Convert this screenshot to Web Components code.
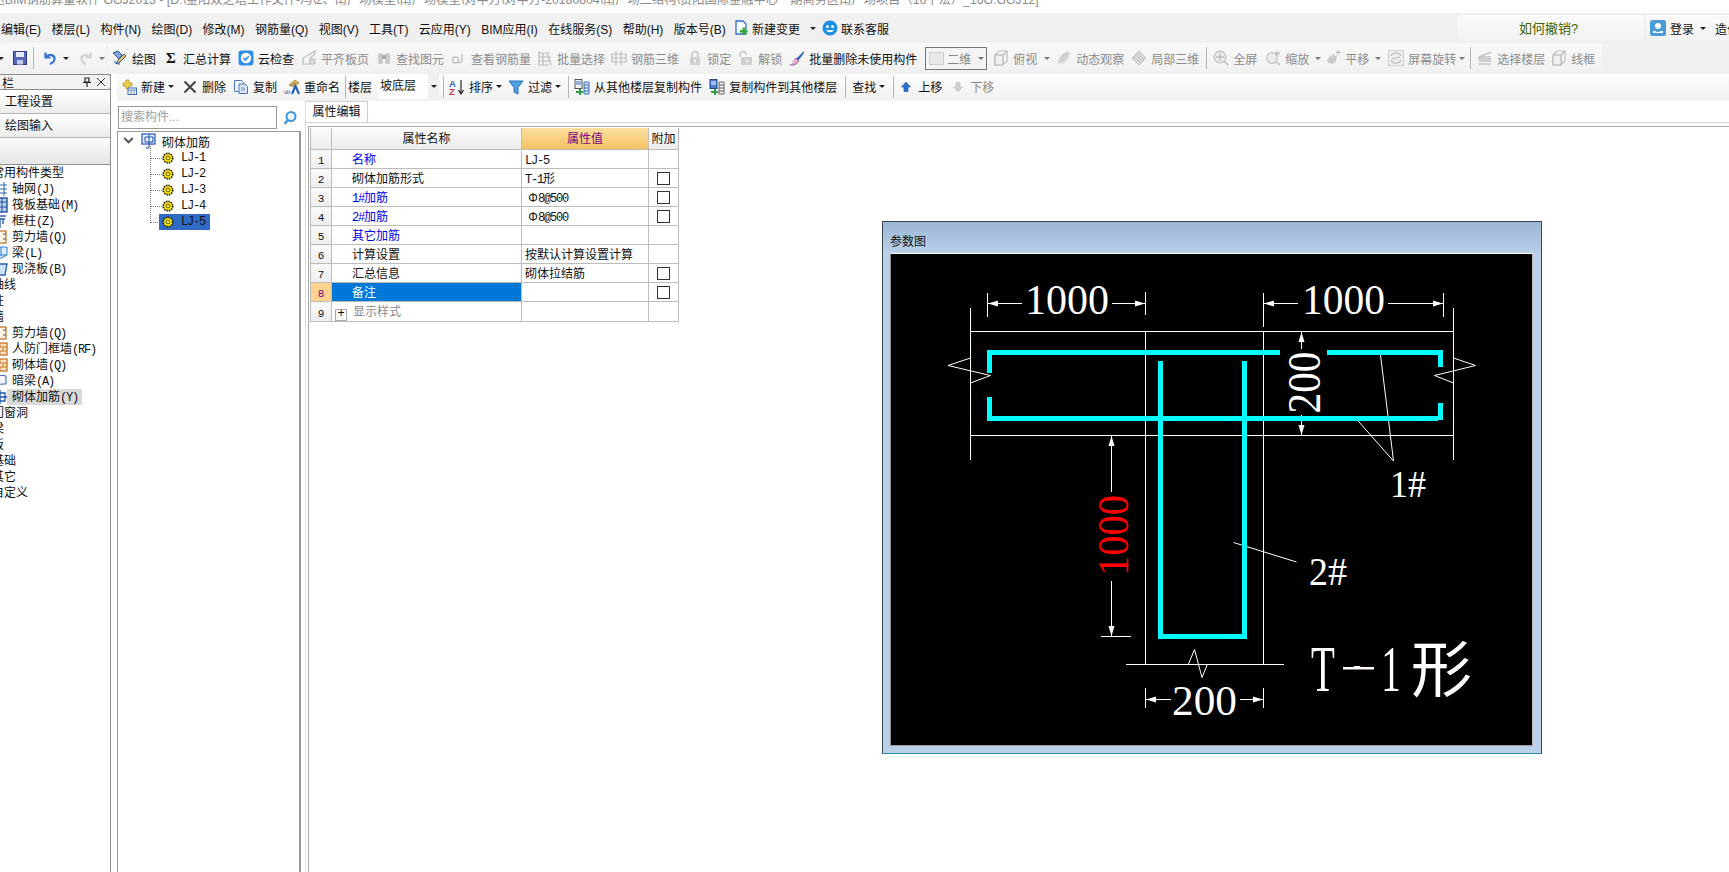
<!DOCTYPE html>
<html lang="zh">
<head>
<meta charset="utf-8">
<title>GGJ2013</title>
<style>
  html, body { margin: 0; height: 100%; background: #fff; overflow: hidden; }
  body { font: 12px "Liberation Sans", "Noto Sans CJK SC", sans-serif; color: #111; }
  app-shell { display: block; position: relative; width: 1729px; height: 872px; overflow: hidden; }
</style>
</head>
<body>
<app-shell>
  <title-bar>广联达BIM钢筋算量软件 GGJ2013 - [D:\金阳双之塔工作文件-冯\2、南广场模型\南广场模型\对中方\对中方-20180804\南广场二结构\贵阳国际金融中心一期商务区南广场项目（16平法）_16G.GGJ12]</title-bar>
  <menu-bar></menu-bar>
  <main-toolbar></main-toolbar>
  <work-area></work-area>
  <param-window></param-window>
</app-shell>

<script>
const svg = (body, w = 16, h = 16) =>
  `<svg width="${w}" height="${h}" viewBox="0 0 16 16" style="display:block;flex:none">${body}</svg>`;

const GRAY = 'fill="none" stroke="#bdbdbd" stroke-width="1.2"';
const ICONS = {
  save: '<rect x="1.5" y="1.5" width="13" height="13" fill="#5566bb" stroke="#2f3c86"/><rect x="4" y="2" width="8" height="5" fill="#e6ebf7"/><rect x="5" y="10" width="6" height="4.5" fill="#c8c8ea"/>',
  undo: '<path d="M3.5 2.5v5h5" fill="none" stroke="#2f74d0" stroke-width="2.2"/><path d="M4 7.5C7 3.5 13 4.5 12.5 9c-.3 2.5-2 4-4.5 5" fill="none" stroke="#2f74d0" stroke-width="2.2"/>',
  redo: '<path d="M12.5 2.5v5h-5" fill="none" stroke="#cfd3d6" stroke-width="2.2"/><path d="M12 7.5C9 3.5 3 4.5 3.5 9c.3 2.5 2 4 4.5 5" fill="none" stroke="#cfd3d6" stroke-width="2.2"/>',
  draw: '<path d="M1 3l5-2 4 4-3 4z" fill="#7fa6d8" stroke="#2d5a9e"/><path d="M4 14l2-4 6-6 2 2-6 6z" fill="#e9c15a" stroke="#2d5a9e"/><path d="M2 11c1 2 3 3 6 3" fill="none" stroke="#2d5a9e"/>',
  cloud: '<rect x=".5" y=".5" width="15" height="15" rx="3" fill="#2d8fe3"/><circle cx="8" cy="8" r="5.2" fill="#fff"/><path d="M5.2 8l2 2 3.6-3.6" fill="none" stroke="#2d8fe3" stroke-width="1.6"/>',
  align: `<path d="M2 14V8l7-4 5-3v3l-5 4v6z" ${GRAY}/><path d="M9 9h5v5H9z" fill="#ddd" stroke="#bbb"/>`,
  binoc: '<rect x="2" y="3" width="5" height="11" rx="2" fill="#c9c9c9"/><rect x="9" y="3" width="5" height="11" rx="2" fill="#c9c9c9"/><rect x="6" y="5" width="4" height="4" fill="#aaa"/>',
  look: '<circle cx="4.5" cy="10" r="3" fill="none" stroke="#c4c4c4" stroke-width="1.4"/><path d="M11 4v7a2.5 2.5 0 0 1-4 1" fill="none" stroke="#c4c4c4" stroke-width="1.4"/>',
  batch: `<path d="M2 1v14M2 3h11M2 7h12M2 11h12M2 15h10M6 3v12M10 3l4 12" ${GRAY}/>`,
  rebar: `<path d="M1 4h14v8H1zM1 8h14M5 1v14M10 1v14" ${GRAY}/>`,
  lock: '<path d="M5 7V4.5a3 3 0 0 1 6 0V7" fill="none" stroke="#c6c6c6" stroke-width="1.5"/><rect x="3" y="7" width="10" height="8" rx="1" fill="#cfcfcf"/><rect x="7" y="9.5" width="2" height="3" fill="#f2f2f2"/>',
  unlock: '<path d="M2 7V4.5a3 3 0 0 1 6 0" fill="none" stroke="#c6c6c6" stroke-width="1.5"/><rect x="3" y="7" width="11" height="8" rx="1" fill="#cfcfcf"/><rect x="8" y="9.5" width="2" height="3" fill="#f2f2f2"/>',
  broom: '<path d="M15 1L7 9l2 2 6-8z" fill="#2a61c4"/><path d="M7 8l3 3-4 4H1c2-1 3-4 6-7z" fill="#e7a3b8" stroke="#7b4a9b" stroke-width=".7"/><path d="M2 14l5-4" stroke="#fff"/>',
  cube: `<path d="M2 5l4-4h8v10l-4 4H2zM2 5h8v10M10 5l4-4" ${GRAY}/><path d="M2 5h8v10H2z" fill="#ececec" fill-opacity=".6" stroke="#bdbdbd"/>`,
  orbit: '<ellipse cx="8" cy="8" rx="3.8" ry="7.5" transform="rotate(40 8 8)" fill="#cfcfcf"/><path d="M2 13c4 2 10-3 12-10" fill="none" stroke="#e6e6e6" stroke-width="1.4"/>',
  local: '<path d="M8 1l7 7-7 7-7-7z" fill="#dcdcdc" stroke="#c0c0c0"/><path d="M4 4l8 8M6 2.5l7.5 7.5M2.5 6l7.5 7.5" stroke="#bbb" fill="none"/>',
  full: '<circle cx="7" cy="7" r="5.8" fill="#eee" stroke="#bcbcbc" stroke-width="1.3"/><path d="M7 3v8M3 7h8M11 11l4 4" stroke="#bbb" stroke-width="1.3"/>',
  zoom: '<circle cx="7" cy="8" r="5.3" fill="#ececec" stroke="#c4c4c4" stroke-width="1.3"/><path d="M12 1v5M10 3.5h5M11 12l4 3" stroke="#bbb" stroke-width="1.4"/>',
  pan: '<path d="M2 11l3-6 2 2 1-4 2 3 2-1-1 6c-1 3-7 4-9 0z" fill="#cbcbcb"/><path d="M13 0v5M11 2.5h5" stroke="#bbb"/>',
  rotate: `<rect x=".5" y=".5" width="15" height="15" fill="#ededed" stroke="#d2d2d2"/><path d="M3 6a5.5 5.5 0 0 1 10 0M13 10a5.5 5.5 0 0 1-10 0" ${GRAY}/><path d="M4 9l8-2" stroke="#bbb"/>`,
  floor: '<path d="M14 2L2 7h12M2 7v2h12M2 11h12M2 14h12" fill="none" stroke="#c2c2c2" stroke-width="1.4"/>',
  newc: '<path d="M5 1h3v3h3v3H8v3H5V7H2V4h3z" fill="#f2d24a" stroke="#a98a20" stroke-width=".7"/><rect x="7" y="9" width="8.5" height="6.5" fill="#fff" stroke="#3e6fb5"/><path d="M7 11h8.5M10 11v4.5M13 11v4.5" stroke="#3e6fb5" stroke-width=".8"/>',
  del: '<path d="M2.5 2.5l11 11M13.5 2.5l-11 11" stroke="#444" stroke-width="2"/>',
  copy: '<path d="M1.5 1.5h7l2 2v9h-9z" fill="#f2f6fc" stroke="#4a78bb"/><path d="M6 5h6l2.5 2.5v7H6z" fill="#dce8f8" stroke="#4a78bb"/><path d="M8 9h4M8 11h4" stroke="#4a78bb" stroke-width=".8"/>',
  rename: '<path d="M5 6l6-5 4 3-5 4z" fill="#d7b44a" stroke="#7b6420" stroke-width=".6"/><path d="M7 7l4-3" stroke="#777"/><text x="0" y="14.5" font-size="7" font-family="Liberation Serif" fill="#444">ab</text><path d="M8 15l3.5-8 3.5 8" fill="none" stroke="#1f57b8" stroke-width="2"/>',
  sort: '<text x="0" y="7.5" font-size="9.5" font-weight="700" font-family="Liberation Sans" fill="#2d66c4">A</text><text x="0" y="16" font-size="9.5" font-weight="700" font-family="Liberation Sans" fill="#b5424a">Z</text><path d="M12 1v13M9.5 11l2.5 4 2.5-4" fill="none" stroke="#222" stroke-width="1.2"/>',
  funnel: '<path d="M1 2h14L10 8.5V15l-4-2V8.5z" fill="#4d9fe0" stroke="#2a70b5"/>',
  fromc: '<rect x="1" y=".5" width="7" height="9" fill="#f4f4f4" stroke="#555"/><path d="M2 3h5M2 5h5" stroke="#3a70c0"/><path d="M2 12h3v-2h2l0 2h2v2H7v2H5v-2H2z" fill="#2f9e3f"/><path d="M10 3h5v12h-5z" fill="#cfe0f4" stroke="#3a70c0"/><path d="M10 6h5M10 9h5M10 12h5" stroke="#3a70c0"/>',
  toc: '<rect x="1" y=".5" width="7" height="9" fill="#4d79d3" stroke="#27488f"/><path d="M2 3h5M2 5h5" stroke="#fff"/><path d="M2 12h3v-2h2l0 2h2v2H7v2H5v-2H2z" fill="#2f9e3f"/><path d="M10 3h5v12h-5z" fill="#eee" stroke="#666"/><path d="M10 6h5M10 9h5M10 12h5" stroke="#666"/>',
  up: '<path d="M8 3l4.5 5H10v4.5H6V8H3.500z" fill="#2c6fd1" stroke="#1c4d9c" stroke-width=".6"/>',
  down: '<path d="M8 13l4.5-5H10V3.500H6V8H3.500z" fill="#d0d0d0" stroke="#bdbdbd" stroke-width=".6"/>',
  newchg: '<path d="M3 1h7l3 3v10H3z" fill="#fff" stroke="#2a70c9" stroke-width="1.3"/><path d="M7 10h2.5V7.5H12V10h2.5v2.500H12V15H9.500v-2.500H7z" fill="#3aa53a"/>',
  service: '<circle cx="8" cy="8" r="7.5" fill="#1b8fe6"/><circle cx="5.5" cy="6.5" r="1.5" fill="#fff"/><circle cx="10.5" cy="6.5" r="1.5" fill="#fff"/><path d="M4 10c2 3 6 3 8 0z" fill="#fff"/>',
  user: '<rect width="16" height="16" rx="2.5" fill="#4b9bd6"/><circle cx="8" cy="6" r="3" fill="#fff"/><path d="M3 13v-2h2.5c1 1.5 4 1.5 5 0H13v2z" fill="#fff"/>',
  axis: '<path d="M2 1v14M7 1v14M12 1v14M0 4h15M0 8h15M0 12h15" stroke="#2e62ad" fill="none"/>',
  raft: '<rect x="1" y="1" width="14" height="14" fill="#bcd2ee" stroke="#1f4f9c" stroke-width="1.4"/><path d="M5 1v14M10 1v14M1 5h14M1 10h14" stroke="#1f4f9c"/>',
  col: '<path d="M2 3h12M3 6h10M8 6v9M5 6v5M11 6v5" stroke="#2e62ad" fill="none" stroke-width="1.4"/>',
  wall: '<rect x="2" y="2" width="12" height="12" fill="#fbf3e6" stroke="#c07a30" stroke-width="1.3"/><path d="M14 5h-3M14 10h-3" stroke="#555"/>',
  beam: '<path d="M1 14V6l8-4h6v8l-8 4z" fill="#dcebfb" stroke="#2e7fc9"/><path d="M9 2v8l6 0M9 10l-8 4" stroke="#2e7fc9" fill="none"/>',
  slab: '<path d="M1 3h14l-2 11H3z" fill="#cfe3f8" stroke="#2e62ad" stroke-width="1.4"/>',
  brick: '<rect x="1" y="2" width="14" height="12" fill="#f9e6c8" stroke="#c9742a" stroke-width="1.3"/><path d="M1 6h14M1 10h14M8 2v4M5 6v4M11 6v4M8 10v4" stroke="#c9742a"/>',
  dark: '<path d="M2 13V5c4-3 9-3 12-2v8c-3 0-8 0-12 2z" fill="#f2f6fb" stroke="#2e62ad"/>',
  tie: '<path d="M1 8h14M8 1v14M3 4h10v8H3z" stroke="#1f55b0" fill="none" stroke-width="1.3"/>',
  gear: '<circle cx="8" cy="8" r="5.4" fill="#ffee00" stroke="#222" stroke-width="2" stroke-dasharray="1.8 1"/><circle cx="8" cy="8" r="2.2" fill="#ffee00" stroke="#444"/>',
  root: '<rect x="1" y="1" width="13" height="10" fill="#eaf1fb" stroke="#2e62c4" stroke-width="1.3"/><path d="M4 4h8v5M4 4v5h8M8 1v14M5 15h3" stroke="#1f4fb5" fill="none"/>'
};

// ascii runs are set in the mono face, like the bitmap font of the original
const mix = text => text.replace(/[\x21-\x7e]+/g, m => `<span class="m">${m.replace(/</g, '&lt;')}</span>`);
const MONO_CSS = `.m { font-family: "Liberation Mono", monospace; font-size: 12px; letter-spacing: -1.2px; line-height: 1; }`;

class TitleBar extends HTMLElement {
  constructor() {
    super();
    this.attachShadow({ mode: 'open' });
    this.shadowRoot.innerHTML = `
      <style>
        :host { display: block; height: 13px; overflow: hidden; background: #fff; color: #8a8a8a; font-size: 12.25px; line-height: 13px; white-space: nowrap; }
        div { margin: -6px 0 0 -32px; }
      </style>
      <div><slot></slot></div>`;
  }
}

class MenuBar extends HTMLElement {
  constructor() {
    super();
    this.attachShadow({ mode: 'open' });
    const items = ['编辑(E)', '楼层(L)', '构件(N)', '绘图(D)', '修改(M)', '钢筋量(Q)', '视图(V)', '工具(T)', '云应用(Y)', 'BIM应用(I)', '在线服务(S)', '帮助(H)', '版本号(B)'];
    this.shadowRoot.innerHTML = `
      <style>
        :host { display: flex; align-items: center; height: 30px; padding-left: 1px; background: #f0f0f0; overflow: hidden; white-space: nowrap; }
        .item { margin-right: 10.4px; }
        .ico { display: flex; align-items: center; gap: 3px; }
        .caret { width: 0; height: 0; border: 3px solid transparent; border-top: 3px solid #222; border-bottom: 0; margin: 0 6px 0 10px; }
        .tip { margin-left: auto; width: 183px; padding-right: 4px; height: 26px; line-height: 28px; text-align: center; color: #3c6400; background: linear-gradient(#fafafa, #f2f2f2); border-radius: 3px; flex: none; font-size: 13px; }
        .login { flex: none; display: flex; align-items: center; width: 79px; height: 26px; margin-left: 2px; padding-left: 4px; background: linear-gradient(#fafafa, #f2f2f2); overflow: hidden; }
        .login span { margin-left: 4px; }
        .login .caret { margin: 0 9px 0 6px; }
      </style>
      ${items.map(t => `<span class="item">${t}</span>`).join('')}
      <span class="ico" style="margin-left:-3px">${svg(ICONS.newchg)}<span>新建变更</span></span>
      <i class="caret"></i>
      <span class="ico">${svg(ICONS.service)}<span>联系客服</span></span>
      <div class="tip">如何撤销?</div>
      <div class="login">${svg(ICONS.user)}<span>登录</span><i class="caret"></i><b style="font-weight:400">造价</b></div>`;
  }
}

// one toolbar button: icon, slotted label, optional little arrow
class ToolItem extends HTMLElement {
  constructor() {
    super();
    this.attachShadow({ mode: 'open' });
  }

  connectedCallback() {
    const icon = this.getAttribute('icon');
    const caret = this.getAttribute('caret');
    const off = this.hasAttribute('off');
    this.shadowRoot.innerHTML = `
      <style>
        :host { display: flex; align-items: center; gap: ${this.getAttribute('gap') || 4}px; flex: none; white-space: nowrap; color: ${off ? '#8c8c8c' : '#111'}; }
        i { width: 0; height: 0; border: 3px solid transparent; border-top: 3px solid ${off ? '#777' : '#222'}; border-bottom: 0; margin-left: ${(caret || 0) - 4}px; }
      </style>
      ${icon ? svg(ICONS[icon]) : ''}<slot></slot>${caret !== null ? '<i></i>' : ''}`;
  }
}

class ToolSep extends HTMLElement {
  constructor() {
    super();
    this.attachShadow({ mode: 'open' });
    this.shadowRoot.innerHTML = `<style>:host { display: block; flex: none; width: 1px; height: 22px; background: #b4b4b4; }</style>`;
  }
}

class MainToolbar extends HTMLElement {
  constructor() {
    super();
    this.attachShadow({ mode: 'open' });
    this.shadowRoot.innerHTML = `
      <style>
        :host { display: flex; height: 31px; background: #f0f0f0; padding: 0 0 1px; box-sizing: border-box; }
        .seg { display: flex; align-items: center; background: linear-gradient(#f9f9f9, #f0f0f0); border-radius: 3px; }
        .a { width: 106px; margin-right: 2px; }
        .b { width: 1494px; padding-left: 4px; box-sizing: border-box; }
        .combo { flex: none; display: flex; align-items: center; box-sizing: border-box; width: 62px; height: 23px; border: 1px solid #777; background: #f4f4f4; color: #888; padding-left: 3px; gap: 3px; }
        .combo b { width: 13px; height: 11px; background: #e8e8e8; border: 1px solid #ccc; }
        .combo i { width: 0; height: 0; border: 3px solid transparent; border-top: 3px solid #777; border-bottom: 0; margin-left: 4px; }
        .t { flex: none; width: 0; height: 0; border: 3px solid transparent; border-top: 3px solid #222; border-bottom: 0; }
      </style>
      <div class="seg a">
        <i class="t" style="margin-left:-2px"></i>
        <tool-item icon="save" style="margin-left:8px"></tool-item>
        <tool-sep style="margin-left:5px"></tool-sep>
        <tool-item icon="undo" caret="9" gap="0" style="margin-left:8px"></tool-item>
        <tool-item icon="redo" caret="9" gap="0" off style="margin-left:9px"></tool-item>
      </div>
      <div class="seg b">
        <tool-item icon="draw">绘图</tool-item>
        <span style="margin-left:10px;width:10px;font:700 15px 'Liberation Serif',serif;flex:none">Σ</span>
        <span style="margin-left:7px;flex:none">汇总计算</span>
        <tool-item icon="cloud" style="margin-left:7px">云检查</tool-item>
        <tool-item icon="align" off style="margin-left:7px">平齐板页</tool-item>
        <tool-item icon="binoc" off style="margin-left:7px">查找图元</tool-item>
        <tool-item icon="look" off style="margin-left:7px">查看钢筋量</tool-item>
        <tool-item icon="batch" off style="margin-left:6px">批量选择</tool-item>
        <tool-item icon="rebar" off style="margin-left:6px">钢筋三维</tool-item>
        <tool-item icon="lock" off style="margin-left:8px">锁定</tool-item>
        <tool-item icon="unlock" off style="margin-left:7px">解锁</tool-item>
        <tool-item icon="broom" style="margin-left:7px">批量删除未使用构件</tool-item>
        <div class="combo" style="margin-left:8px"><b></b>二维<i></i></div>
        <tool-item icon="cube" off caret="7" style="margin-left:6px">俯视</tool-item>
        <tool-item icon="orbit" off style="margin-left:6px">动态观察</tool-item>
        <tool-item icon="local" off style="margin-left:7px">局部三维</tool-item>
        <tool-sep style="margin-left:7px"></tool-sep>
        <tool-item icon="full" off style="margin-left:6px">全屏</tool-item>
        <tool-item icon="zoom" off caret="6" style="margin-left:8px">缩放</tool-item>
        <tool-item icon="pan" off caret="6" style="margin-left:4px">平移</tool-item>
        <tool-item icon="rotate" off caret="3" style="margin-left:7px">屏幕旋转</tool-item>
        <tool-sep style="margin-left:5px"></tool-sep>
        <tool-item icon="floor" off style="margin-left:6px">选择楼层</tool-item>
        <tool-item icon="cube" off style="margin-left:6px">线框</tool-item>
      </div>`;
  }
}

class SecondToolbar extends HTMLElement {
  constructor() {
    super();
    this.attachShadow({ mode: 'open' });
    this.shadowRoot.innerHTML = `
      <style>
        :host { display: flex; align-items: center; box-sizing: border-box; height: 28px; padding: 0 0 2px 4px; background: linear-gradient(#fcfcfc, #f1f1f1); border-radius: 3px 0 0 0; white-space: nowrap; }
        .floor { flex: none; display: flex; width: 61px; height: 25px; margin-left: 6px; background: #fff; }
        .floor span { flex: 1; padding-left: 2px; line-height: 24px; }
        .floor b { width: 11px; background: #f0f0f0; position: relative; }
        .floor b::after { content: ''; position: absolute; left: 3px; top: 11px; border: 3px solid transparent; border-top: 3px solid #222; border-bottom: 0; }
      </style>
      <tool-item icon="newc" caret="3">新建</tool-item>
      <tool-item icon="del" style="margin-left:8px">删除</tool-item>
      <tool-item icon="copy" style="margin-left:7px">复制</tool-item>
      <tool-item icon="rename" style="margin-left:7px">重命名</tool-item>
      <tool-sep style="margin-left:5px"></tool-sep>
      <span style="margin-left:2px;flex:none">楼层</span>
      <div class="floor"><span>坡底层</span><b></b></div>
      <tool-sep style="margin-left:4px"></tool-sep>
      <tool-item icon="sort" caret="3" style="margin-left:5px">排序</tool-item>
      <tool-item icon="funnel" caret="3" style="margin-left:6px">过滤</tool-item>
      <tool-sep style="margin-left:7px"></tool-sep>
      <tool-item icon="fromc" style="margin-left:5px">从其他楼层复制构件</tool-item>
      <tool-item icon="toc" style="margin-left:7px">复制构件到其他楼层</tool-item>
      <tool-sep style="margin-left:8px"></tool-sep>
      <tool-item caret="3" style="margin-left:6px">查找</tool-item>
      <tool-sep style="margin-left:8px"></tool-sep>
      <tool-item icon="up" style="margin-left:4px">上移</tool-item>
      <tool-item icon="down" off style="margin-left:8px">下移</tool-item>`;
  }
}

class NavPanel extends HTMLElement {
  constructor() {
    super();
    this.attachShadow({ mode: 'open' });
    const rows = [
      ['常用构件类型'], ['轴网(J)', 'axis'], ['筏板基础(M)', 'raft'], ['框柱(Z)', 'col'], ['剪力墙(Q)', 'wall'], ['梁(L)', 'beam'], ['现浇板(B)', 'slab'],
      ['轴线'], ['柱'], ['墙'], ['剪力墙(Q)', 'wall'], ['人防门框墙(RF)', 'brick'], ['砌体墙(Q)', 'brick'], ['暗梁(A)', 'dark'], ['砌体加筋(Y)', 'tie', true],
      ['门窗洞'], ['梁'], ['板'], ['基础'], ['其它'], ['自定义']
    ];
    this.shadowRoot.innerHTML = `
      <style>
        :host { display: block; flex: none; width: 111px; box-sizing: border-box; border-right: 1px solid #8f8f8f; background: #fff; overflow: hidden; white-space: nowrap; }
        ${MONO_CSS}
        .head { display: flex; align-items: center; height: 14px; border: 1px solid #8c8c8c; border-left: 0; border-radius: 0 3px 3px 0; background: #f2f2f2; margin-right: -1px; }
        .head span { margin-left: 2px; flex: 1; }
        .head svg { margin-right: 4px; }
        .btn { height: 22px; line-height: 22px; padding-left: 5px; margin-top: 1px; border-bottom: 1px solid #b5b5b5; background: linear-gradient(#fefefe, #ececec); }
        .gap { height: 26px; background: linear-gradient(#fbfbfb, #e6e6e6); border-bottom: 1px solid #8f8f8f; }
        .list { margin-left: -8px; }
        .row { display: flex; align-items: center; height: 16px; line-height: 16px; }
        .row svg { margin-right: -1px; }
        .row .tx { padding: 0 0 0 5px; }
        .row.sel .tx { background: #d9d9d9; width: 70px; }
      </style>
      <div class="head"><span>栏</span>
        <svg width="10" height="10" viewBox="0 0 10 10"><path d="M3 1h4v4H3zM1 5.5h8M5 5.5V10" fill="none" stroke="#222" stroke-width="1.2"/></svg>
        <svg width="10" height="10" viewBox="0 0 10 10"><path d="M1 1l8 8M9 1L1 9" stroke="#333"/></svg>
      </div>
      <div class="btn">工程设置</div>
      <div class="btn">绘图输入</div>
      <div class="gap"></div>
      <div class="list">
        ${rows.map(([t, ic, sel]) => ic
          ? `<div class="row${sel ? ' sel' : ''}">${svg(ICONS[ic])}<span class="tx">${mix(t)}</span></div>`
          : `<div class="row"><span>${t}</span></div>`).join('')}
      </div>`;
  }
}

class CompTree extends HTMLElement {
  constructor() {
    super();
    this.attachShadow({ mode: 'open' });
    const kids = ['LJ-1', 'LJ-2', 'LJ-3', 'LJ-4', 'LJ-5'];
    this.shadowRoot.innerHTML = `
      <style>
        :host { display: flex; flex-direction: column; flex: none; width: 184px; margin-left: 6px; }
        ${MONO_CSS}
        .search { flex: none; display: flex; align-items: center; height: 30px; padding: 3px 0 0 1px; box-sizing: border-box; }
        .search div { width: 155px; height: 21px; line-height: 20px; border: 1px solid #9a9a9a; padding-left: 2px; color: #a0a0a0; }
        .search svg { margin-left: 5px; }
        .box { flex: 1; border: 1px solid #999; border-width: 1px 2px 0 1px; padding-top: 1px; position: relative; background: #fff; }
        .root { display: flex; align-items: center; height: 16px; margin-left: 7px; }
        .root svg { margin-left: 9px; }
        .root span { margin-left: 5px; }
        .chev { width: 5px; height: 5px; border: solid #555; border-width: 0 2px 2px 0; transform: rotate(45deg) translate(-2px, -2px); }
        .kid { display: flex; align-items: center; height: 16px; margin-left: 32px; padding-left: 12px; position: relative; top: 1px; }
        .kid::before { content: ''; position: absolute; left: 0; top: -8px; width: 11px; height: 16px; border-left: 1px dotted #777; border-bottom: 1px dotted #777; }
        .kid .lb { display: flex; align-items: center; height: 16px; width: 48px; margin-left: -3px; padding-left: 3px; }
        .kid.sel .lb { background: #316ac5; }
        .kid svg { margin-left: -1px; }
        .kid .m { margin-left: 6px; }
      </style>
      <div class="search"><div>搜索构件...</div>
        <svg width="16" height="16" viewBox="0 0 16 16"><circle cx="9" cy="6.5" r="4.5" fill="#eaf4fc" stroke="#3f93d8" stroke-width="2"/><path d="M6 10l-3.5 4" stroke="#3f93d8" stroke-width="2.4"/></svg>
      </div>
      <div class="box">
        <div class="root"><i class="chev"></i>${svg(ICONS.root)}<span>砌体加筋</span></div>
        ${kids.map((k, i) => `<div class="kid${i === 4 ? ' sel' : ''}"><div class="lb">${svg(ICONS.gear, 14, 14)}<span class="m">${k}</span></div></div>`).join('')}
      </div>`;
  }
}

class PropGrid extends HTMLElement {
  constructor() {
    super();
    this.attachShadow({ mode: 'open' });
    // name, value, blue name, has checkbox
    const rows = [
      ['名称', 'LJ-5', true, false],
      ['砌体加筋形式', 'T-1形', false, true],
      ['1#加筋', ' Φ8@500', true, true],
      ['2#加筋', ' Φ8@500', true, true],
      ['其它加筋', '', true, false],
      ['计算设置', '按默认计算设置计算', false, false],
      ['汇总信息', '砌体拉结筋', false, true],
      ['备注', '', false, true]
    ];
    this.shadowRoot.innerHTML = `
      <style>
        :host { display: block; flex: 1; margin-left: 4px; border-left: 1px solid #ddd; background: #fff; }
        ${MONO_CSS}
        .tabs { display: flex; height: 21px; border-bottom: 1px solid #cfcfcf; }
        .tab { width: 62px; box-sizing: border-box; height: 21px; line-height: 20px; text-align: center; border: 1px solid #cfcfcf; border-bottom: 0; border-left: 0; background: #fff; }
        .frame { height: 760px; margin: 3px 0 0 2px; padding: 1px 0 0 1px; border: solid #a9a9a9; border-width: 1px 0 0 1px; }
        table { border-collapse: collapse; table-layout: fixed; width: 368px; }
        td, th { height: 18px; padding: 0; border: 1px solid #bdbdbd; font-weight: 400; white-space: nowrap; overflow: hidden; line-height: 16px; }
        td.no, td.name, td.val2 { height: 16px; padding-top: 2px; }
        th { height: 21px; background: linear-gradient(#fbfbfb, #ececec); border-top: 0; }
        th.val { background: linear-gradient(#fbdf9f, #f4c264); color: #800080; }
        .no { background: linear-gradient(#fafafa, #ededed); text-align: center; }
        .no .m { letter-spacing: 0; font-size: 11px; }
        td.name { padding-left: 20px; }
        .blue { color: #0000e6; }
        td.val2 { padding-left: 3px; }
        .act .no { background: #fdd28f; color: #800080; }
        .act .name { background: #0078d7; color: #fff; }
        .cb { text-align: center; }
        .cb i { display: inline-block; width: 11px; height: 11px; border: 1px solid #333; vertical-align: middle; }
        .plus { display: inline-block; box-sizing: border-box; width: 12px; height: 12px; margin: 0 6px 0 -17px; border: 1px solid #aaa; line-height: 9px; text-align: center; color: #000; font-family: "Liberation Mono"; vertical-align: -1px; }
        .gray { color: #8a8a8a; }
      </style>
      <div class="tabs"><div class="tab">属性编辑</div></div>
      <div class="frame">
        <table>
          <colgroup><col style="width:21px"><col style="width:190px"><col style="width:127px"><col style="width:30px"></colgroup>
          <tr><th></th><th>属性名称</th><th class="val">属性值</th><th>附加</th></tr>
          ${rows.map(([n, v, blue, cb], i) => `
            <tr class="${i === 7 ? 'act' : ''}">
              <td class="no"><span class="m">${i + 1}</span></td>
              <td class="name${blue ? ' blue' : ''}">${mix(n)}</td>
              <td class="val2">${mix(v).replace(/^ /, '&nbsp;')}</td>
              <td class="cb">${cb ? '<i></i>' : ''}</td>
            </tr>`).join('')}
          <tr>
            <td class="no"><span class="m">9</span></td>
            <td class="name gray"><span class="plus">+</span>显示样式</td><td></td><td></td>
          </tr>
        </table>
      </div>`;
  }
}

class WorkArea extends HTMLElement {
  constructor() {
    super();
    this.attachShadow({ mode: 'open' });
    this.shadowRoot.innerHTML = `
      <style>
        :host { display: flex; height: 798px; }
        .right { flex: 1; display: flex; flex-direction: column; min-width: 0; padding-left: 6px; }
        .lower { flex: 1; display: flex; margin-left: -6px; }
      </style>
      <nav-panel></nav-panel>
      <div class="right">
        <second-toolbar></second-toolbar>
        <div class="lower"><comp-tree></comp-tree><prop-grid></prop-grid></div>
      </div>`;
  }
}

// the floating drawing window, coordinates inside the svg are page pixels
class ParamWindow extends HTMLElement {
  constructor() {
    super();
    this.attachShadow({ mode: 'open' });
    const L = (x1, y1, x2, y2) => `M${x1} ${y1}L${x2} ${y2}`;
    const thin = [
      L(970.5, 308, 970.5, 460), L(1453.5, 308, 1453.5, 460),
      L(970.5, 331.5, 1453.5, 331.5), L(970.5, 435.5, 1453.5, 435.5),
      L(987.5, 293, 987.5, 317), L(1145.5, 292, 1145.5, 315), L(1145.5, 331, 1145.5, 664),
      L(1263.5, 293, 1263.5, 327), L(1263.5, 331, 1263.5, 664), L(1443.5, 293, 1443.5, 317),
      L(987, 303.5, 1022, 303.5), L(1112, 303.5, 1145, 303.5), L(1263, 303.5, 1298, 303.5), L(1388, 303.5, 1443, 303.5),
      L(1301.5, 332, 1301.5, 349), L(1301.5, 415, 1301.5, 435),
      L(1111.5, 436, 1111.5, 492), L(1111.5, 581, 1111.5, 636), L(1101, 636.5, 1131, 636.5),
      L(1126, 664.5, 1284, 664.5),
      L(1146, 699.5, 1171, 699.5), L(1240, 699.5, 1263, 699.5), L(1145.5, 688, 1145.5, 708), L(1263.5, 688, 1263.5, 708),
      L(1380.5, 355, 1393.5, 461), L(1355.5, 418, 1393.5, 461), L(1233.5, 542.5, 1296.5, 562),
      'M970.5 358L948 365.5L990.5 375.5L970.5 383',
      'M1453.5 358L1475.5 365.5L1434.5 375.5L1453.5 383',
      'M1188.5 664L1194.5 649.5L1202 677.5L1207.5 664'
    ].join('');
    const cyan = [
      L(987, 352.5, 1280, 352.5), L(1327, 352.5, 1440, 352.5), L(989.5, 350, 989.5, 373), L(989.5, 397, 989.5, 420),
      L(1440.5, 350, 1440.5, 367), L(1440.5, 403, 1440.5, 420), L(987, 418.5, 1438, 418.5),
      L(1160.5, 361, 1160.5, 639), L(1244.5, 361, 1244.5, 639), L(1158, 636.5, 1247, 636.5)
    ].join('');
    const arrows = [
      'M988 303.5l10-3v6z', 'M1145 303.5l-10-3v6z', 'M1264 303.5l10-3v6z', 'M1443 303.5l-10-3v6z',
      'M1301.5 332l-3 10h6z', 'M1301.5 435l-3-10h6z', 'M1111.5 436l-3 10h6z', 'M1111.5 636l-3-10h6z',
      'M1146 699.5l10-3v6z', 'M1263 699.5l-10-3v6z'
    ].join('');
    this.shadowRoot.innerHTML = `
      <style>
        :host { position: absolute; left: 882px; top: 221px; width: 660px; height: 533px; box-sizing: border-box; border: 1px solid #3a4a55; border-bottom-color: #2c8fa8; background: linear-gradient(#9cb6d3 0, #b9d0e8 32px); padding: 0 8px 8px 7px; display: flex; flex-direction: column; }
        .cap { flex: none; height: 31px; line-height: 40px; font-size: 12px; color: #111; }
        .cv { flex: 1; background: #000; border: solid; border-color: #fff #bbb #999 #888; border-width: 1px; }
        svg { display: block; }
        text { fill: #fff; font-family: "Liberation Serif", serif; }
      </style>
      <div class="cap">参数图</div>
      <div class="cv">
        <svg width="642" height="491" viewBox="891 254 642 491">
          <path d="${thin}" fill="none" stroke="#fff" stroke-width="1"/>
          <path d="${cyan}" fill="none" stroke="#00ffff" stroke-width="5"/>
          <path d="${arrows}" fill="#fff"/>
          <text x="1025" y="314" font-size="43" textLength="84" lengthAdjust="spacingAndGlyphs">1000</text>
          <text x="1302" y="314" font-size="43" textLength="83" lengthAdjust="spacingAndGlyphs">1000</text>
          <text x="1172" y="715" font-size="43" textLength="65" lengthAdjust="spacingAndGlyphs">200</text>
          <text transform="translate(1320 413.5) rotate(-90)" font-size="46" textLength="62" lengthAdjust="spacingAndGlyphs">200</text>
          <text transform="translate(1128 576) rotate(-90)" font-size="44" textLength="81" lengthAdjust="spacingAndGlyphs" style="fill:#ff0000">1000</text>
          <text x="1390" y="497" font-size="38" textLength="36" lengthAdjust="spacingAndGlyphs">1#</text>
          <text x="1309" y="585" font-size="40" textLength="38" lengthAdjust="spacingAndGlyphs">2#</text>
          <rect x="1343" y="667" width="31" height="2.5" fill="#fff"/>
          <text transform="translate(1311 691) scale(.6 1)" font-size="65"><tspan x="0">T</tspan><tspan x="70" dy="-14" font-size="40">-</tspan><tspan x="117" dy="14">1</tspan></text>
          <text x="1411" y="692" font-size="61" style="font-family:'Noto Sans CJK SC',sans-serif">形</text>
        </svg>
      </div>`;
  }
}

class AppShell extends HTMLElement {
  constructor() {
    super();
    this.attachShadow({ mode: 'open' });
    this.shadowRoot.innerHTML = `<style>:host { display: block; }</style><slot></slot>`;
  }
}

customElements.define('title-bar', TitleBar);
customElements.define('menu-bar', MenuBar);
customElements.define('tool-item', ToolItem);
customElements.define('tool-sep', ToolSep);
customElements.define('main-toolbar', MainToolbar);
customElements.define('second-toolbar', SecondToolbar);
customElements.define('nav-panel', NavPanel);
customElements.define('comp-tree', CompTree);
customElements.define('prop-grid', PropGrid);
customElements.define('work-area', WorkArea);
customElements.define('param-window', ParamWindow);
customElements.define('app-shell', AppShell);
</script>
</body>
</html>
